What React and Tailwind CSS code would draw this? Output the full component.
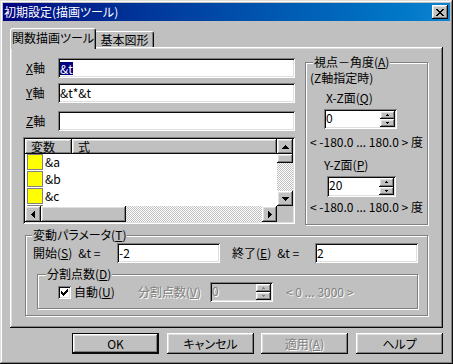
import React from 'react';

const raised = "shadow-[inset_-1px_-1px_#0a0a0a,inset_1px_1px_#ffffff,inset_-2px_-2px_#808080,inset_2px_2px_#dfdfdf]";
const sunken = "shadow-[inset_1px_1px_#808080,inset_-1px_-1px_#ffffff,inset_2px_2px_#0a0a0a,inset_-2px_-2px_#dfdfdf]";
const winFrame = "shadow-[inset_-1px_-1px_#0a0a0a,inset_1px_1px_#dfdfdf,inset_-2px_-2px_#808080,inset_2px_2px_#ffffff]";
const groupBox = "relative border border-[#808080] shadow-[1px_1px_0_#ffffff,inset_1px_1px_0_#ffffff]";
const grayText = "text-[#808080] [text-shadow:1px_1px_0_#ffffff]";
const checker = "bg-[conic-gradient(#ffffff_25%,#c0c0c0_0_50%,#ffffff_0_75%,#c0c0c0_0)] bg-[length:2px_2px]";

const arrows = {
  up: { w: 7, h: 4, d: 'M3 0h1v1h-1zM2 1h3v1h-3zM1 2h5v1h-5zM0 3h7v1h-7z' },
  down: { w: 7, h: 4, d: 'M0 0h7v1h-7zM1 1h5v1h-5zM2 2h3v1h-3zM3 3h1v1h-1z' },
  left: { w: 4, h: 7, d: 'M3 0h1v7h-1zM2 1h1v5h-1zM1 2h1v3h-1zM0 3h1v1h-1z' },
  right: { w: 4, h: 7, d: 'M0 0h1v7h-1zM1 1h1v5h-1zM2 2h1v3h-1zM3 3h1v1h-1z' },
  tinyUp: { w: 3, h: 2, d: 'M1 0h1v1h-1zM0 1h3v1h-3z' },
  tinyDown: { w: 3, h: 2, d: 'M0 0h3v1h-3zM1 1h1v1h-1z' },
};

const Arrow = ({ dir, color = '#000000' }) => {
  const a = arrows[dir];
  return (
    <svg width={a.w} height={a.h} viewBox={`0 0 ${a.w} ${a.h}`} shapeRendering="crispEdges">
      <path d={a.d} fill={color} />
    </svg>
  );
};

const ScrollBtn = ({ dir, className }) => (
  <div className={`bg-[#c0c0c0] flex items-center justify-center ${raised} ${className}`}>
    <Arrow dir={dir} />
  </div>
);

const Spin = ({ value, className, disabled }) => (
  <div className={`flex p-[2px] ${sunken} ${disabled ? 'bg-[#c0c0c0]' : 'bg-white'} ${className}`}>
    <div className={`flex-1 ${disabled ? grayText : ''}`}>{value}</div>
    <div className="flex flex-col w-[15px]">
      <div className={`flex-1 bg-[#c0c0c0] flex items-center justify-center ${raised}`}>
        <Arrow dir="tinyUp" color={disabled ? '#808080' : '#000000'} />
      </div>
      <div className={`flex-1 bg-[#c0c0c0] flex items-center justify-center ${raised}`}>
        <Arrow dir="tinyDown" color={disabled ? '#808080' : '#000000'} />
      </div>
    </div>
  </div>
);

const Legend = ({ children, className }) => (
  <span className={`absolute -top-[8px] bg-[#c0c0c0] px-[1px] ${className}`}>{children}</span>
);

const FieldRow = ({ letter, children, className }) => (
  <div className={`flex items-center h-[20px] ${className}`}>
    <span className="w-[35px] pl-[3px]"><u>{letter}</u>軸</span>
    <div className={`w-[237px] h-[20px] bg-white flex items-center px-[2px] ${sunken}`}>{children}</div>
  </div>
);

const ListView = () => (
  <div className={`mt-[6px] w-[272px] h-[87px] bg-white p-[2px] ${sunken}`}>
    <div className="flex flex-col h-full">
      <div className="flex h-[67px]">
        <div className="flex-1 flex flex-col overflow-hidden">
          <div className="flex h-[15px] shrink-0">
            <div className={`w-[47px] bg-[#c0c0c0] pl-[6px] leading-[15px] ${raised}`}>変数</div>
            <div className={`flex-1 bg-[#c0c0c0] pl-[6px] leading-[15px] ${raised}`}>式</div>
          </div>
          {['&a', '&b', '&c', ''].map((v, i) => (
            <div key={i} className="flex h-[17px] shrink-0 items-start">
              <div className="ml-[2px] w-[16px] h-[16px] bg-[#ffff00] border border-[#808080]" />
              <span className="ml-[2px] leading-[16px]">{v}</span>
            </div>
          ))}
        </div>
        <div className="w-[16px] flex flex-col">
          <ScrollBtn dir="up" className="h-[15px]" />
          <div className={`h-[9px] bg-[#c0c0c0] ${raised}`} />
          <div className={`flex-1 ${checker}`} />
          <ScrollBtn dir="down" className="h-[15px]" />
        </div>
      </div>
      <div className="flex h-[16px]">
        <ScrollBtn dir="left" className="w-[16px]" />
        <div className={`w-[85px] bg-[#c0c0c0] ${raised}`} />
        <div className={`flex-1 ${checker}`} />
        <ScrollBtn dir="right" className="w-[15px]" />
        <div className="w-[16px] bg-[#c0c0c0]" />
      </div>
    </div>
  </div>
);

const ViewGroup = () => (
  <div className={`ml-[10px] mt-[4px] w-[123px] h-[163px] ${groupBox} pt-[8px] px-[4px]`}>
    <Legend className="left-[7px]">視点－角度(<u>A</u>)</Legend>
    <div>(Z軸指定時)</div>
    <div className="mt-[6px] ml-[16px]">X-Z面(<u>Q</u>)</div>
    <Spin value="0" className="mt-[4px] ml-[14px] w-[73px] h-[20px]" />
    <div className="mt-[6px]">&lt; -180.0 ... 180.0 &gt; 度</div>
    <div className="mt-[9px] ml-[14px]">Y-Z面(<u>P</u>)</div>
    <Spin value="20" className="mt-[4px] ml-[17px] w-[69px] h-[21px]" />
    <div className="mt-[3px]">&lt; -180.0 ... 180.0 &gt; 度</div>
  </div>
);

const ParamGroup = () => (
  <div className={`ml-[2px] mt-[10px] w-[403px] h-[81px] ${groupBox} pt-[7px] pl-[7px]`}>
    <Legend className="left-[6px]">変動パラメータ(<u>T</u>)</Legend>
    <div className="flex items-center h-[20px]">
      <span className="w-[84px]">開始(<u>S</u>)<span className="ml-[6px]">&amp;t =</span></span>
      <div className={`w-[103px] h-[20px] bg-white flex items-center px-[2px] ${sunken}`}>-2</div>
      <span className="ml-[12px] w-[83px]">終了(<u>E</u>)<span className="ml-[6px]">&amp;t =</span></span>
      <div className={`w-[103px] h-[20px] bg-white flex items-center px-[2px] ${sunken}`}>2</div>
    </div>
    <div className={`mt-[11px] ml-[4px] w-[381px] h-[35px] ${groupBox}`}>
      <Legend className="left-[8px]">分割点数(<u>D</u>)</Legend>
      <div className="mt-[7px] flex items-center h-[20px]">
        <div className={`ml-[20px] w-[13px] h-[13px] bg-white flex items-center justify-center ${sunken}`}>
          <svg width="7" height="7" viewBox="0 0 7 7" shapeRendering="crispEdges">
            <path d="M6 0h1v1h-1zM5 1h2v1h-2zM0 2h1v1h-1zM4 2h3v1h-3zM0 3h2v1h-2zM3 3h3v1h-3zM0 4h5v1h-5zM1 5h3v1h-3zM2 6h1v1h-1z" fill="#000000" />
          </svg>
        </div>
        <span className="ml-[3px] w-[64px]">自動(<u>U</u>)</span>
        <span className={`w-[72px] ${grayText}`}>分割点数(<u>V</u>)</span>
        <Spin value="0" disabled className="w-[63px] h-[20px]" />
        <span className={`ml-[13px] ${grayText}`}>&lt; 0 ... 3000 &gt;</span>
      </div>
    </div>
  </div>
);

const DlgButton = ({ children, className }) => (
  <button className={`h-[21px] w-[87px] bg-[#c0c0c0] flex items-center justify-center ${raised} ${className}`}>
    {children}
  </button>
);

export default function App() {
  return (
    <div className={`w-[453px] h-[364px] bg-[#c0c0c0] p-[3px] flex flex-col text-[12px] leading-[14px] text-black font-['Noto_Sans_CJK_JP','Noto_Sans',sans-serif] [font-feature-settings:'palt'] ${winFrame}`}>
      <div className="h-[18px] flex items-center bg-gradient-to-r from-[#000080] to-[#1084d0] pl-[1px] pr-[2px]">
        <span className="text-white">初期設定(描画ツール)</span>
        <div className={`ml-auto w-[16px] h-[14px] bg-[#c0c0c0] flex items-center justify-center ${raised}`}>
          <svg width="8" height="7" viewBox="0 0 8 7" shapeRendering="crispEdges">
            <path d="M0 0h2v1h-2zM6 0h2v1h-2zM1 1h2v1h-2zM5 1h2v1h-2zM2 2h4v1h-4zM3 3h2v1h-2zM2 4h4v1h-4zM1 5h2v1h-2zM5 5h2v1h-2zM0 6h2v1h-2zM6 6h2v1h-2z" fill="#000000" />
          </svg>
        </div>
      </div>

      <div className="mt-[7px] ml-[7px] h-[19px] flex items-end">
        <div className="relative z-10 self-start h-[21px] w-[86px] bg-[#c0c0c0] border-l border-t border-white border-r border-r-[#0a0a0a] rounded-t-[3px] shadow-[inset_-1px_0_#808080] flex justify-center pt-[2px]">
          関数描画ツール
        </div>
        <div className="h-[16px] w-[58px] bg-[#c0c0c0] border-t border-white border-r border-r-[#0a0a0a] rounded-tr-[3px] shadow-[inset_-1px_0_#808080] flex items-center justify-center">
          基本図形
        </div>
      </div>

      <div className={`ml-[7px] w-[433px] h-[281px] pt-[11px] pl-[13px] ${raised}`}>
        <div className="flex">
          <div className="w-[272px]">
            <FieldRow letter="X">
              <span className="bg-[#000080] text-white leading-[13px]">&amp;t</span>
            </FieldRow>
            <FieldRow letter="Y" className="mt-[5px]">&amp;t*&amp;t</FieldRow>
            <FieldRow letter="Z" className="mt-[8px]" />
            <ListView />
          </div>
          <ViewGroup />
        </div>
        <ParamGroup />
      </div>

      <div className="mt-[5px] flex">
        <DlgButton className="ml-[69px] border border-[#0a0a0a]">OK</DlgButton>
        <DlgButton className="ml-[8px]">キャンセル</DlgButton>
        <DlgButton className={`ml-[7px] ${grayText}`}>適用(<u>A</u>)</DlgButton>
        <DlgButton className="ml-[8px]">ヘルプ</DlgButton>
      </div>
    </div>
  );
}
